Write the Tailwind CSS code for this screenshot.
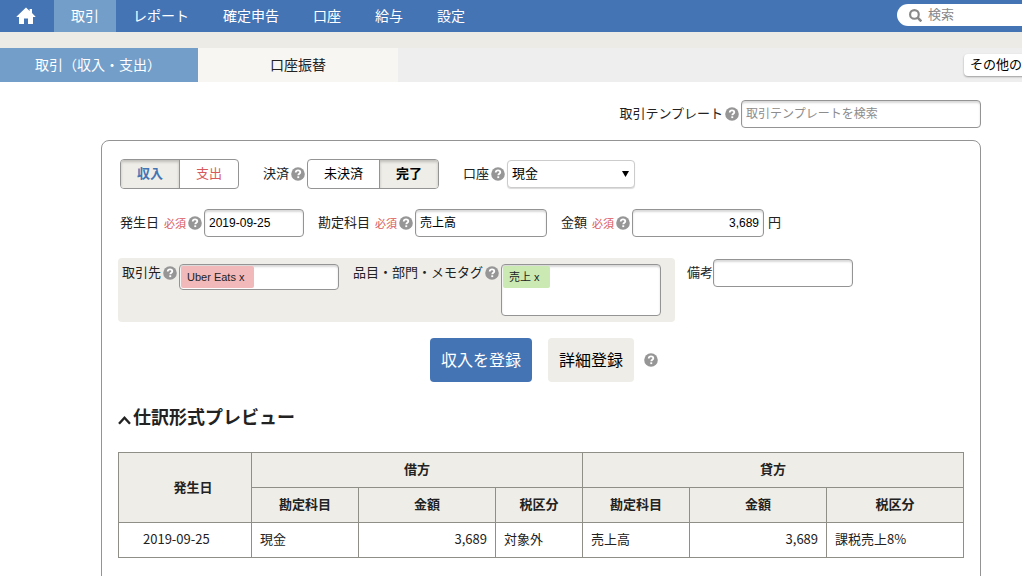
<!DOCTYPE html>
<html lang="ja">

<head>
<meta charset="UTF-8">
<meta name="viewport" content="width=device-width, initial-scale=1.0">
<title>取引（収入・支出）</title>
<script src="https://cdn.jsdelivr.net/npm/@tailwindcss/browser@4"></script>
</head>

<body class="bg-white text-[#222] text-[13px] leading-[18px] font-['Noto_Sans_CJK_JP',sans-serif] overflow-x-hidden">

	<!-- Icons -->
	<svg class="hidden">
		<symbol id="icon-help" viewBox="0 0 14 14">
			<circle cx="7" cy="7" r="6.8" fill="#969696" />
			<path d="M4.7 5.5C4.8 4 5.8 3.4 7 3.4c1.3 0 2.3.7 2.3 1.9 0 1.5-2 1.5-2 3" fill="none" stroke="#fff" stroke-width="1.8" />
			<rect x="6.3" y="9.3" width="1.9" height="1.8" fill="#fff" />
		</symbol>
	</svg>

	<!-- Global navigation -->
	<header class="flex h-8 bg-[#4474b4] text-white text-sm overflow-hidden">
		<a href="#" aria-label="ホーム" class="flex items-center justify-center w-[54px] pr-[2px] shrink-0">
			<svg class="w-5 h-[18px]" viewBox="0 0 20 18" fill="currentColor">
				<path d="M10 0.5 L0.6 9.4 Q0.3 10 1 10 H3 V16.4 Q3 17 3.6 17 H8 V11.4 H12 V17 H16.4 Q17 17 17 16.4 V10 H19 Q19.7 10 19.4 9.4 L16 6.1 V2 H13.6 V3.9 Z" />
			</svg>
		</a>
		<nav class="flex leading-[30px] whitespace-nowrap">
			<a href="#" class="px-[17px] bg-[#739ec9]">取引</a>
			<a href="#" class="px-[17px]">レポート</a>
			<a href="#" class="px-[17px]">確定申告</a>
			<a href="#" class="px-[17px]">口座</a>
			<a href="#" class="px-[17px]">給与</a>
			<a href="#" class="px-[17px]">設定</a>
		</nav>
		<label class="flex items-center ml-auto -mr-10 mt-1 w-[165px] h-[22px] pl-3 gap-[6px] rounded-full bg-white shrink-0">
			<svg class="w-[13px] h-[13px]" viewBox="0 0 12 12" fill="none" stroke="#888" stroke-width="2">
				<circle cx="5" cy="5" r="4" />
				<path d="M8 8 L11.4 11.4" stroke-width="2.4" />
			</svg>
			<input type="search" aria-label="検索" placeholder="検索" class="w-24 pb-[2px] text-[13px] text-[#222] placeholder:text-[#888] outline-none">
		</label>
	</header>

	<!-- Sub tabs -->
	<div class="h-4 bg-[#edebe6]"></div>
	<div class="flex h-[34px] bg-[#eee] text-sm leading-8 overflow-hidden">
		<a href="#" class="w-[198px] shrink-0 bg-[#739ec9] text-white pl-[35px]">取引（収入・支出）</a>
		<a href="#" class="w-[200px] shrink-0 bg-[#f7f6f2] text-center">口座振替</a>
		<button type="button" class="ml-auto -mr-10 mt-[6px] w-[98px] h-[22px] pl-[6px] pb-[2px] shrink-0 rounded bg-white text-black text-[13px] leading-5 text-left whitespace-nowrap overflow-hidden shadow-[0_1px_2px_rgba(0,0,0,0.35)]">その他の操作</button>
	</div>

	<main class="pl-[101px] pr-[41px] pt-[18px] [&_label]:pb-[2px]">
		<!-- Template search -->
		<div class="flex items-center justify-end">
			<label for="template">取引テンプレート</label>
			<svg class="w-[14px] h-[14px] mx-[2px]"><use href="#icon-help" /></svg>
			<input type="text" id="template" placeholder="取引テンプレートを検索" class="w-60 h-7 px-1 pb-[3px] text-xs rounded border border-[#949494] placeholder:text-[#8c8c8c] shadow-[inset_0_2px_2px_rgba(0,0,0,0.15)]">
		</div>

		<form class="mt-3 px-4 pt-[18px] pb-16 rounded-t-lg border border-[#949494]">
			<div class="flex items-center pl-[2px]">
				<div class="flex w-[119px] h-[30px] rounded border border-[#949494] overflow-hidden">
					<button type="button" class="flex-1 pb-[2px] bg-[#eeede7] text-[#4474b4] font-bold border-r border-[#949494] shadow-[inset_0_2px_3px_rgba(0,0,0,0.2)]">収入</button>
					<button type="button" class="flex-1 pb-[2px] text-[#d9595b]">支出</button>
				</div>
				<span class="ml-6 pb-[2px]">決済</span>
				<svg class="w-[14px] h-[14px] mx-[2px]"><use href="#icon-help" /></svg>
				<div class="flex w-[132px] h-[30px] rounded border border-[#949494] overflow-hidden text-black">
					<button type="button" class="w-[72px] pb-[2px] border-r border-[#949494]">未決済</button>
					<button type="button" class="flex-1 pb-[2px] bg-[#eeede7] font-bold shadow-[inset_0_2px_3px_rgba(0,0,0,0.2)]">完了</button>
				</div>
				<label for="account" class="ml-6">口座</label>
				<svg class="w-[14px] h-[14px] mx-[2px]"><use href="#icon-help" /></svg>
				<div class="relative">
					<select id="account" class="block appearance-none w-32 h-7 pl-1 pb-[2px] rounded border border-[#ccc] bg-white text-black shadow-[0_1px_1px_rgba(0,0,0,0.15)]">
						<option>現金</option>
					</select>
					<svg class="absolute right-[6px] top-[11px] w-[7px] h-[6px] pointer-events-none" viewBox="0 0 7 6"><path d="M0 0 H7 L3.5 6 Z" /></svg>
				</div>
			</div>

			<div class="flex items-center mt-5 pl-[2px]">
				<label for="date">発生日</label>
				<span class="ml-[5px] text-[11px] text-[#d9595b]">必須</span>
				<svg class="w-[14px] h-[14px] mx-[2px]"><use href="#icon-help" /></svg>
				<input type="text" id="date" value="2019-09-25" class="w-[100px] h-7 px-1 text-xs text-black font-['Liberation_Sans','Noto_Sans_CJK_JP',sans-serif] rounded border border-[#949494] shadow-[inset_0_2px_2px_rgba(0,0,0,0.15)]">
				<label for="item" class="ml-[14px]">勘定科目</label>
				<span class="ml-[5px] text-[11px] text-[#d9595b]">必須</span>
				<svg class="w-[14px] h-[14px] mx-[2px]"><use href="#icon-help" /></svg>
				<input type="text" id="item" value="売上高" class="w-[132px] h-7 px-1 pb-[3px] text-xs text-black rounded border border-[#949494] shadow-[inset_0_2px_2px_rgba(0,0,0,0.15)]">
				<label for="amount" class="ml-[14px]">金額</label>
				<span class="ml-[5px] text-[11px] text-[#d9595b]">必須</span>
				<svg class="w-[14px] h-[14px] mx-[2px]"><use href="#icon-help" /></svg>
				<input type="text" id="amount" value="3,689" class="w-[132px] h-7 px-1 text-xs text-right text-black font-['Liberation_Sans','Noto_Sans_CJK_JP',sans-serif] rounded border border-[#949494] shadow-[inset_0_2px_2px_rgba(0,0,0,0.15)]">
				<span class="ml-1 pb-[2px]">円</span>
			</div>

			<div class="flex items-start mt-[21px]">
				<div class="flex items-start w-[557px] h-16 pl-1 pt-[6px] rounded-sm bg-[#eeede7]">
					<label for="partner" class="leading-4">取引先</label>
					<svg class="w-[14px] h-[14px] mx-[2px] mt-[2px]"><use href="#icon-help" /></svg>
					<div class="flex items-start w-40 h-[26px] p-px rounded border border-[#949494] bg-white shadow-[inset_0_2px_2px_rgba(0,0,0,0.15)]">
						<button type="button" class="h-[22px] pl-[6px] pr-[10px] shrink-0 rounded-xs bg-[#f2b9bb] text-[11px] font-['Liberation_Sans','Noto_Sans_CJK_JP',sans-serif]">Uber Eats x</button>
						<input type="text" id="partner" class="w-full min-w-0 h-[22px] px-1 text-xs outline-none">
					</div>
					<label for="tags" class="ml-[14px] leading-4">品目・部門・メモタグ</label>
					<svg class="w-[14px] h-[14px] mx-[2px] mt-[2px]"><use href="#icon-help" /></svg>
					<div class="flex items-start w-40 h-[52px] p-px rounded border border-[#949494] bg-white shadow-[inset_0_2px_2px_rgba(0,0,0,0.15)]">
						<button type="button" class="h-[22px] pl-[6px] pr-[10px] shrink-0 rounded-xs bg-[#cbe9b2] text-[11px] font-['Liberation_Sans','Noto_Sans_CJK_JP',sans-serif]">売上 x</button>
						<input type="text" id="tags" class="w-full min-w-0 h-[22px] px-1 text-xs outline-none">
					</div>
				</div>
				<label for="memo" class="ml-3 mt-[6px] leading-4">備考</label>
				<input type="text" id="memo" class="w-[140px] h-7 mt-px px-1 text-xs rounded border border-[#949494] shadow-[inset_0_2px_2px_rgba(0,0,0,0.15)]">
			</div>

			<div class="flex items-center justify-center gap-4 mt-4 pl-[6px]">
				<button type="submit" class="h-11 px-[11px] pb-[3px] rounded bg-[#4474b4] text-white text-base">収入を登録</button>
				<button type="button" class="h-11 px-[11px] pb-[3px] rounded bg-[#eeede7] text-black text-base">詳細登録</button>
				<svg class="w-[14px] h-[14px] -ml-[6px]"><use href="#icon-help" /></svg>
			</div>

			<!-- Journal preview -->
			<h2 class="flex items-center gap-[2px] mt-[22px] text-lg leading-6 font-bold">
				<svg class="w-[13px] h-[9px] mt-2" viewBox="0 0 13 9" fill="none" stroke="currentColor" stroke-width="2.4"><path d="M1 7.8 L6.5 1.8 L12 7.8" /></svg>仕訳形式プレビュー</h2>

			<table class="w-full mt-6 table-fixed border-collapse [&_td]:h-[35px] [&_td]:px-2 [&_td]:pb-[2px] [&_td]:border [&_td]:border-[#8f8f87] [&_th]:h-[35px] [&_th]:px-2 [&_th]:pb-[2px] [&_th]:border [&_th]:border-[#8f8f87] [&_th]:bg-[#eeede7]">
				<colgroup>
					<col class="w-[133px]">
					<col class="w-[107px]">
					<col class="w-[137px]">
					<col class="w-[87px]">
					<col class="w-[107px]">
					<col class="w-[137px]">
					<col>
				</colgroup>
				<thead>
					<tr>
						<th rowspan="2"><span class="pl-4">発生日</span></th>
						<th colspan="3">借方</th>
						<th colspan="3">貸方</th>
					</tr>
					<tr>
						<th>勘定科目</th>
						<th>金額</th>
						<th>税区分</th>
						<th>勘定科目</th>
						<th>金額</th>
						<th>税区分</th>
					</tr>
				</thead>
				<tbody>
					<tr>
						<td><span class="pl-4">2019-09-25</span></td>
						<td>現金</td>
						<td class="text-right">3,689</td>
						<td>対象外</td>
						<td>売上高</td>
						<td class="text-right">3,689</td>
						<td>課税売上8%</td>
					</tr>
				</tbody>
			</table>
		</form>
	</main>
</body>

</html>
